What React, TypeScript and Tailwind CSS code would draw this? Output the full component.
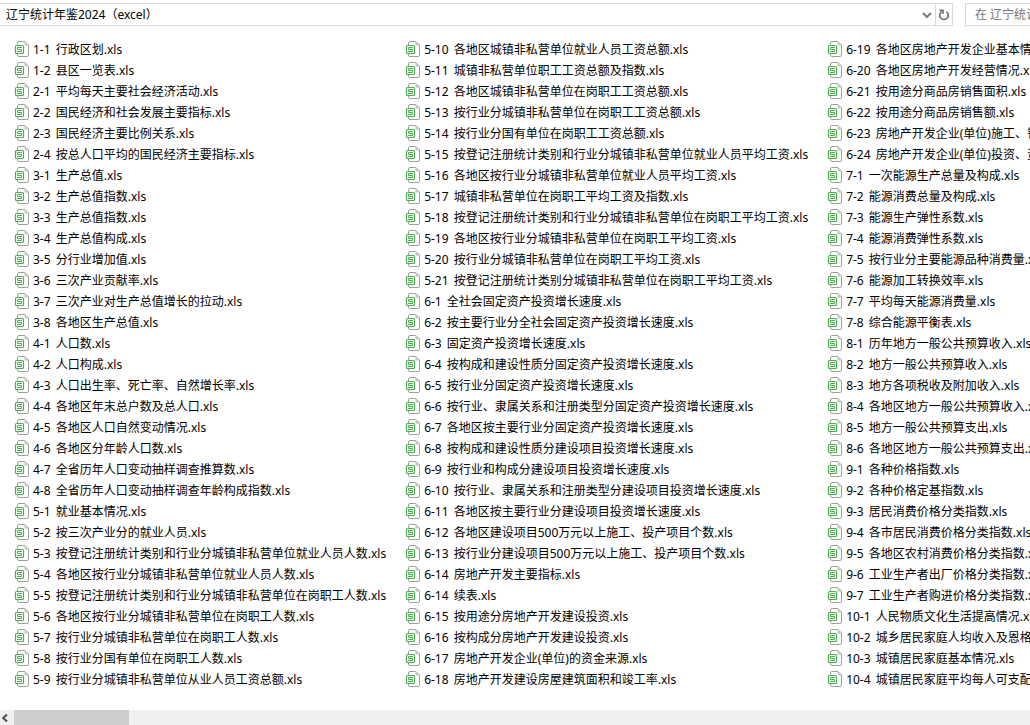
const files = [
  "1-1 行政区划.xls",
  "1-2 县区一览表.xls",
  "2-1 平均每天主要社会经济活动.xls",
  "2-2 国民经济和社会发展主要指标.xls",
  "2-3 国民经济主要比例关系.xls",
  "2-4 按总人口平均的国民经济主要指标.xls",
  "3-1 生产总值.xls",
  "3-2 生产总值指数.xls",
  "3-3 生产总值指数.xls",
  "3-4 生产总值构成.xls",
  "3-5 分行业增加值.xls",
  "3-6 三次产业贡献率.xls",
  "3-7 三次产业对生产总值增长的拉动.xls",
  "3-8 各地区生产总值.xls",
  "4-1 人口数.xls",
  "4-2 人口构成.xls",
  "4-3 人口出生率、死亡率、自然增长率.xls",
  "4-4 各地区年末总户数及总人口.xls",
  "4-5 各地区人口自然变动情况.xls",
  "4-6 各地区分年龄人口数.xls",
  "4-7 全省历年人口变动抽样调查推算数.xls",
  "4-8 全省历年人口变动抽样调查年龄构成指数.xls",
  "5-1 就业基本情况.xls",
  "5-2 按三次产业分的就业人员.xls",
  "5-3 按登记注册统计类别和行业分城镇非私营单位就业人员人数.xls",
  "5-4 各地区按行业分城镇非私营单位就业人员人数.xls",
  "5-5 按登记注册统计类别和行业分城镇非私营单位在岗职工人数.xls",
  "5-6 各地区按行业分城镇非私营单位在岗职工人数.xls",
  "5-7 按行业分城镇非私营单位在岗职工人数.xls",
  "5-8 按行业分国有单位在岗职工人数.xls",
  "5-9 按行业分城镇非私营单位从业人员工资总额.xls",
  "5-10 各地区城镇非私营单位就业人员工资总额.xls",
  "5-11 城镇非私营单位职工工资总额及指数.xls",
  "5-12 各地区城镇非私营单位在岗职工工资总额.xls",
  "5-13 按行业分城镇非私营单位在岗职工工资总额.xls",
  "5-14 按行业分国有单位在岗职工工资总额.xls",
  "5-15 按登记注册统计类别和行业分城镇非私营单位就业人员平均工资.xls",
  "5-16 各地区按行业分城镇非私营单位就业人员平均工资.xls",
  "5-17 城镇非私营单位在岗职工平均工资及指数.xls",
  "5-18 按登记注册统计类别和行业分城镇非私营单位在岗职工平均工资.xls",
  "5-19 各地区按行业分城镇非私营单位在岗职工平均工资.xls",
  "5-20 按行业分城镇非私营单位在岗职工平均工资.xls",
  "5-21 按登记注册统计类别分城镇非私营单位在岗职工平均工资.xls",
  "6-1 全社会固定资产投资增长速度.xls",
  "6-2 按主要行业分全社会固定资产投资增长速度.xls",
  "6-3 固定资产投资增长速度.xls",
  "6-4 按构成和建设性质分固定资产投资增长速度.xls",
  "6-5 按行业分固定资产投资增长速度.xls",
  "6-6 按行业、隶属关系和注册类型分固定资产投资增长速度.xls",
  "6-7 各地区按主要行业分固定资产投资增长速度.xls",
  "6-8 按构成和建设性质分建设项目投资增长速度.xls",
  "6-9 按行业和构成分建设项目投资增长速度.xls",
  "6-10 按行业、隶属关系和注册类型分建设项目投资增长速度.xls",
  "6-11 各地区按主要行业分建设项目投资增长速度.xls",
  "6-12 各地区建设项目500万元以上施工、投产项目个数.xls",
  "6-13 按行业分建设项目500万元以上施工、投产项目个数.xls",
  "6-14 房地产开发主要指标.xls",
  "6-14 续表.xls",
  "6-15 按用途分房地产开发建设投资.xls",
  "6-16 按构成分房地产开发建设投资.xls",
  "6-17 房地产开发企业(单位)的资金来源.xls",
  "6-18 房地产开发建设房屋建筑面积和竣工率.xls",
  "6-19 各地区房地产开发企业基本情况.xls",
  "6-20 各地区房地产开发经营情况.xls",
  "6-21 按用途分商品房销售面积.xls",
  "6-22 按用途分商品房销售额.xls",
  "6-23 房地产开发企业(单位)施工、销售情况.xls",
  "6-24 房地产开发企业(单位)投资、资金情况.xls",
  "7-1 一次能源生产总量及构成.xls",
  "7-2 能源消费总量及构成.xls",
  "7-3 能源生产弹性系数.xls",
  "7-4 能源消费弹性系数.xls",
  "7-5 按行业分主要能源品种消费量.xls",
  "7-6 能源加工转换效率.xls",
  "7-7 平均每天能源消费量.xls",
  "7-8 综合能源平衡表.xls",
  "8-1 历年地方一般公共预算收入.xls",
  "8-2 地方一般公共预算收入.xls",
  "8-3 地方各项税收及附加收入.xls",
  "8-4 各地区地方一般公共预算收入.xls",
  "8-5 地方一般公共预算支出.xls",
  "8-6 各地区地方一般公共预算支出.xls",
  "9-1 各种价格指数.xls",
  "9-2 各种价格定基指数.xls",
  "9-3 居民消费价格分类指数.xls",
  "9-4 各市居民消费价格分类指数.xls",
  "9-5 各地区农村消费价格分类指数.xls",
  "9-6 工业生产者出厂价格分类指数.xls",
  "9-7 工业生产者购进价格分类指数.xls",
  "10-1 人民物质文化生活提高情况.xls",
  "10-2 城乡居民家庭人均收入及恩格尔系数.xls",
  "10-3 城镇居民家庭基本情况.xls",
  "10-4 城镇居民家庭平均每人可支配收入.xls",
];

function SheetIcon() {
  return (
    <svg className="w-4 h-[17px] shrink-0" viewBox="0 0 16 17" fill="none">
      <path d="M3.5 4V2Q3.5 .5 5 .5H11L14.5 4V14Q14.5 15.5 13 15.5H5Q3.5 15.5 3.5 14V13" fill="#fff" stroke="#a0a0a0" />
      <path d="M10.5 .5L14.5 4.5H11.5Q10.5 4.5 10.5 3.5Z" fill="#c4c4c4" />
      <rect x="1.5" y="4.5" width="8" height="8" rx="1" fill="#fff" stroke="#4caf50" strokeWidth="1.2" />
      <path d="M8 6.5H3.5V8.5H7.5V10.5H3" stroke="#4caf50" />
    </svg>
  );
}

function FileItem({ name }: { name: string }) {
  const space = name.indexOf(" ");

  return (
    <li className="flex items-center gap-[3px] whitespace-pre">
      <SheetIcon />
      <span>
        <span className="mr-0.5">{name.slice(0, space + 1)}</span>
        {name.slice(space + 1)}
      </span>
    </li>
  );
}

export default function App() {
  return (
    <div className="min-h-screen flex flex-col overflow-hidden bg-white text-black text-xs font-['Noto_Sans','Noto_Sans_CJK_SC',sans-serif]">
      {/* Barra de dirección y búsqueda */}
      <header className="flex gap-3 pt-[3px]">
        <div className="flex-1 flex h-[23px] border border-l-0 border-[#d9d9d9]">
          <input
            type="text"
            aria-label="地址"
            defaultValue="辽宁统计年鉴2024（excel）"
            className="flex-1 min-w-0 px-1.5 outline-none"
          />
          <button aria-label="上一个位置" className="w-4 flex items-center justify-center">
            <svg className="w-2.5 h-2.5" viewBox="0 0 10 10" fill="none" stroke="#7a7a7a" strokeWidth="2">
              <path d="M1 3L5 7L9 3" />
            </svg>
          </button>
          <button aria-label="刷新" className="w-[17px] flex items-center justify-center border-l border-[#d9d9d9]">
            <svg className="w-3 h-3" viewBox="0 0 12 12" fill="none" stroke="#6e6e6e" strokeWidth="1.6">
              <path d="M8.4 2.6A4.3 4.3 0 1 1 3.6 2.6" />
              <path d="M1.6 1.4H5V5" />
            </svg>
          </button>
        </div>
        <input
          type="text"
          aria-label="搜索"
          placeholder="在 辽宁统计年鉴2024（excel） 中搜索"
          className="w-[65px] h-[23px] pl-[9px] border border-r-0 border-[#d9d9d9] outline-none placeholder:text-[#767676]"
        />
      </header>

      {/* Lista de archivos por columnas */}
      <main className="flex-1 pt-[13px] pl-3.5 pb-5">
        <ul className="grid grid-flow-col grid-rows-[repeat(31,21px)] auto-cols-max gap-x-[19px]">
          {files.map((name) => (
            <FileItem key={name} name={name} />
          ))}
        </ul>
      </main>

      {/* Barra de desplazamiento horizontal */}
      <footer className="flex h-[15px] bg-[#f0f0f0]">
        <button aria-label="向左滚动" className="w-3.5 flex items-center">
          <svg className="w-2.5 h-2.5" viewBox="0 0 10 10" fill="none" stroke="#505050" strokeWidth="2">
            <path d="M7 1.5L3.2 5L7 8.5" />
          </svg>
        </button>
        <div className="w-[115px] bg-[#cdcdcd]"></div>
      </footer>
    </div>
  );
}
